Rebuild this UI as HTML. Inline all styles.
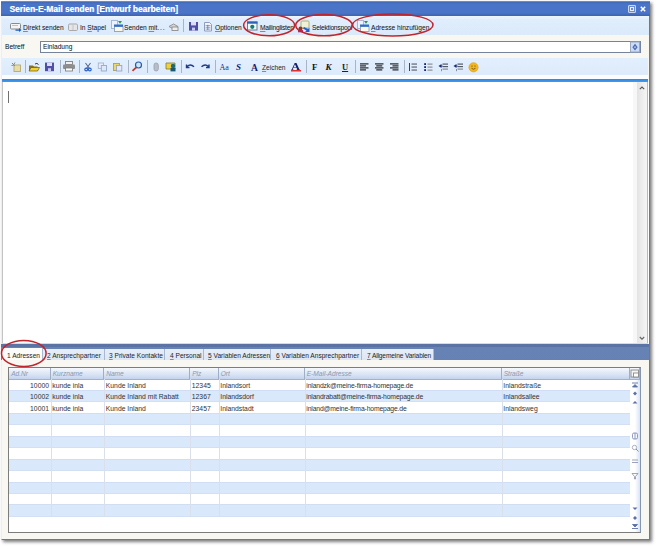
<!DOCTYPE html><html><head><meta charset="utf-8"><style>
*{margin:0;padding:0;box-sizing:border-box}
html,body{width:658px;height:548px;overflow:hidden;background:#fff;font-family:"Liberation Sans",sans-serif;}
.txt{text-shadow:0.2px 0 0 rgba(30,30,30,0.2)}
div{position:absolute}
.txt{font-size:6.6px;color:#1e1e1e;white-space:nowrap;line-height:8px}
.sep{width:1px;background:#a9b5c6}
u{text-decoration-color:#8a8a8a}
.tab{top:349px;height:11px;background:linear-gradient(#e6eef9,#dde6f3);border-right:1px solid #a9b8d0}
.tab span{position:absolute;top:3px;font-size:6.6px;color:#1e1e1e;white-space:nowrap;line-height:8px}
.hdr{top:368px;height:11.5px;background:linear-gradient(#f6f8fc,#d8e3f4 60%,#c4d4ee);border-right:1px solid #9eaec6;border-bottom:1px solid #a2b2ca}
.hdr span{position:absolute;left:2.2px;top:1.5px;font-size:6.6px;font-style:italic;color:#8c98ae;white-space:nowrap;line-height:8px}
.row{left:9px;width:621px;height:12.45px;box-shadow:inset 0 1px 0 #d0ddf3,inset 0 -1px 0 #d3e0f4}
.blue{background:#dae8fc}
.cell{font-size:6.8px;color:#333;white-space:nowrap;line-height:8px}
.vl{top:379px;width:1px;height:138px;background:#d9e0ec}
</style></head><body>
<div style="left:1px;top:1px;width:649px;height:539px;background:#f9f7f2;border-left:1px solid #eceef0;border-right:1.5px solid #70788a;border-bottom:1.5px solid #6e7a8a;box-shadow:2px 2px 3px rgba(0,0,0,0.5)"></div>
<div style="left:1px;top:1px;width:649px;height:15px;background:linear-gradient(#8aa2d2 0,#4169b6 1.2px,#4a74c8 3px,#4a74c8 12px,#3f66b2 14.5px)"></div>
<div style="left:9.5px;top:5px;font-size:8.4px;font-weight:bold;color:#fff;white-space:nowrap;line-height:9px;text-shadow:0.4px 0 0 rgba(255,255,255,0.6)">Serien-E-Mail senden [Entwurf bearbeiten]</div>
<div style="left:627.5px;top:5px;width:8px;height:7.5px;border:1px solid #c8d6f4;background:#6a8cd6;border-radius:1px"></div>
<div style="left:629.5px;top:7px;width:4px;height:3.5px;border:1px solid #e8eefc"></div>
<svg style="position:absolute;left:639.5px;top:5.5px" width="6" height="6"><path d="M0.8 0.8 L5.2 5.2 M5.2 0.8 L0.8 5.2" stroke="#fff" stroke-width="1.5"/></svg>
<div style="left:2px;top:16px;width:647px;height:19px;background:linear-gradient(#eef6fe,#dfedfc 20%,#dbeafb)"></div>
<div class="txt" style="left:23px;top:23.5px"><u>D</u>irekt senden</div>
<div class="txt" style="left:80px;top:23.5px">In <u>S</u>tapel</div>
<div class="txt" style="left:124px;top:23.5px">Senden <u>m</u>it<span style="letter-spacing:0.9px">...</span></div>
<div class="txt" style="left:215px;top:23.5px"><u>O</u>ptionen</div>
<div class="txt" style="left:260px;top:23.5px"><span style="letter-spacing:-0.2px"><u>M</u>ailinglisten</span></div>
<div class="txt" style="left:312px;top:23.5px"><span style="letter-spacing:-0.2px">Selektionspool</span></div>
<div class="txt" style="left:371px;top:23.5px"><u>A</u>dresse hinzufügen</div>
<div class="sep" style="left:183px;top:19px;height:13px"></div>
<div class="txt" style="left:5px;top:43px">Betreff</div>
<div style="left:40px;top:41px;width:601px;height:12px;background:#fff;border:1px solid #76839c"></div>
<div class="txt" style="left:43px;top:43px">Einladung</div>
<div style="left:2px;top:57.5px;width:646px;height:17px;background:linear-gradient(#e2effd,#dceafb)"></div>
<div class="sep" style="left:25px;top:60px;height:13px"></div>
<div class="sep" style="left:59.5px;top:60px;height:13px"></div>
<div class="sep" style="left:78.5px;top:60px;height:13px"></div>
<div class="sep" style="left:127.5px;top:60px;height:13px"></div>
<div class="sep" style="left:147px;top:60px;height:13px"></div>
<div class="sep" style="left:180.5px;top:60px;height:13px"></div>
<div class="sep" style="left:214.5px;top:60px;height:13px"></div>
<div class="sep" style="left:305.5px;top:60px;height:13px"></div>
<div class="sep" style="left:354.5px;top:60px;height:13px"></div>
<div class="sep" style="left:404px;top:60px;height:13px"></div>
<div style="left:2px;top:74.5px;width:646px;height:4.5px;background:#fbfcfd"></div>
<div style="left:2px;top:79px;width:646px;height:3px;background:linear-gradient(#4a80c4,#3590ea 50%,#4a98ea)"></div>
<div style="left:2px;top:82px;width:646px;height:261px;background:#fff;border-left:1px solid #c4c4c4"></div>
<div style="left:633px;top:82px;width:4px;height:261px;background:#f7f7f7"></div>
<div style="left:637px;top:82px;width:11px;height:261px;background:linear-gradient(90deg,#e3e3e3,#f3f3f3 85%);border-right:1px solid #b8b8b8"></div>
<div style="left:648px;top:82px;width:1px;height:261px;background:#fff"></div>
<div style="left:8px;top:91px;width:1px;height:11.5px;background:#707070"></div>
<div style="left:2px;top:343px;width:646px;height:1px;background:#d6dae2"></div>
<div style="left:1px;top:344px;width:648px;height:16px;background:linear-gradient(#5a73a4,#5a74a6 2.5px,#6783b6 3.5px,#6682b5)"></div>
<div class="tab" style="left:2px;width:41px;background:#fbfbf9;top:348px;height:12px;"><span style="left:5px;top:4px;">1 Adressen</span></div>
<div class="tab" style="left:43px;width:62px;"><span style="left:4px;"><u>2</u> Ansprechpartner</span></div>
<div class="tab" style="left:105px;width:60px;"><span style="left:4px;"><u>3</u> Private Kontakte</span></div>
<div class="tab" style="left:165px;width:39px;"><span style="left:5px;"><u>4</u> Personal</span></div>
<div class="tab" style="left:204px;width:67px;"><span style="left:4px;"><u>5</u> Variablen Adressen</span></div>
<div class="tab" style="left:271px;width:91px;"><span style="left:5px;"><u>6</u> Variablen Ansprechpartner</span></div>
<div class="tab" style="left:362px;width:72px;"><span style="left:5px;"><i style="font-style:normal;letter-spacing:-0.13px"><u>7</u> Allgemeine Variablen</i></span></div>
<div style="left:8px;top:367px;width:633px;height:166px;background:#fff;border:1px solid #7c7c7c;border-right-color:#8696b2"></div>
<div style="left:635px;top:379px;width:5px;height:153px;background:linear-gradient(90deg,rgba(255,255,255,0),#d8e3f6)"></div>
<div class="hdr" style="left:9px;width:41.5px"><span>Ad.Nr</span></div>
<div class="hdr" style="left:50.5px;width:53.5px"><span>Kurzname</span></div>
<div class="hdr" style="left:104px;width:86px"><span>Name</span></div>
<div class="hdr" style="left:190px;width:28.5px"><span>Plz</span></div>
<div class="hdr" style="left:218.5px;width:86.0px"><span>Ort</span></div>
<div class="hdr" style="left:304.5px;width:197.0px"><span>E-Mail-Adresse</span></div>
<div class="hdr" style="left:501.5px;width:128.0px"><span>Straße</span></div>
<div class="hdr" style="left:629.5px;width:10.5px"><span></span></div>
<div class="row blue" style="top:389.95px"></div>
<div class="row blue" style="top:412.85px"></div>
<div class="row blue" style="top:435.75px"></div>
<div class="row blue" style="top:458.65px"></div>
<div class="row blue" style="top:481.55px"></div>
<div class="row blue" style="top:504.45px"></div>
<div class="vl" style="left:50.5px"></div>
<div class="vl" style="left:104px"></div>
<div class="vl" style="left:190px"></div>
<div class="vl" style="left:218.5px"></div>
<div class="vl" style="left:304.5px"></div>
<div class="vl" style="left:501.5px"></div>
<div class="cell" style="left:9px;width:40px;text-align:right;top:381.6px">10000</div>
<div class="cell" style="left:52.3px;top:381.6px;">kunde inla</div>
<div class="cell" style="left:105.8px;top:381.6px;">Kunde Inland</div>
<div class="cell" style="left:191.8px;top:381.6px;">12345</div>
<div class="cell" style="left:220.3px;top:381.6px;">Inlandsort</div>
<div class="cell" style="left:306.3px;top:381.6px;letter-spacing:-0.15px;">inlandzk@meine-firma-homepage.de</div>
<div class="cell" style="left:503.3px;top:381.6px;">Inlandstraße</div>
<div class="cell" style="left:9px;width:40px;text-align:right;top:393.05px">10002</div>
<div class="cell" style="left:52.3px;top:393.05px;">kunde inla</div>
<div class="cell" style="left:105.8px;top:393.05px;">Kunde Inland mit Rabatt</div>
<div class="cell" style="left:191.8px;top:393.05px;">12367</div>
<div class="cell" style="left:220.3px;top:393.05px;">Inlandsdorf</div>
<div class="cell" style="left:306.3px;top:393.05px;letter-spacing:-0.15px;">inlandrabatt@meine-firma-homepage.de</div>
<div class="cell" style="left:503.3px;top:393.05px;">Inlandsallee</div>
<div class="cell" style="left:9px;width:40px;text-align:right;top:404.5px">10001</div>
<div class="cell" style="left:52.3px;top:404.5px;">kunde inla</div>
<div class="cell" style="left:105.8px;top:404.5px;">Kunde Inland</div>
<div class="cell" style="left:191.8px;top:404.5px;">23457</div>
<div class="cell" style="left:220.3px;top:404.5px;">Inlandstadt</div>
<div class="cell" style="left:306.3px;top:404.5px;letter-spacing:-0.15px;">inland@meine-firma-homepage.de</div>
<div class="cell" style="left:503.3px;top:404.5px;">Inlandsweg</div>
<svg style="position:absolute;left:0;top:0" width="658" height="548"><rect x="10.5" y="23.5" width="10" height="5.5" rx="1" fill="#f4f4f4" stroke="#8a8a8a" stroke-width="1"/><line x1="12" y1="25.5" x2="18" y2="25.5" stroke="#c0c0c0" stroke-width="1"/><path d="M15.5 29.5 L19 29.5 L19 28 L21.5 30 L19 32 L19 30.8 L15.5 30.8 Z" fill="#1a5cc8"/><rect x="68.5" y="24" width="9" height="6.5" rx="1.2" fill="#e6e6e6" stroke="#a9a9a9" stroke-width="1"/><line x1="73" y1="24.5" x2="73" y2="30" stroke="#c4c4c4" stroke-width="1"/><rect x="111.5" y="20.5" width="6" height="8" fill="#eef3fb" stroke="#a8b8d8" stroke-width="1"/><rect x="114.5" y="26.5" width="8.5" height="5" fill="#fbf9ee" stroke="#9aa6b8" stroke-width="1"/><rect x="114" y="24.5" width="9" height="2.2" fill="#2b6fcf"/><path d="M118 21 L122 21 L120 23.8 Z" fill="#2a9a3a"/><path d="M169 26.5 L173.5 24 L178 26.5 L173.5 29 Z" fill="#d8d8d8" stroke="#8c8c8c" stroke-width="0.9"/><rect x="172" y="27" width="6" height="3.5" fill="#eee" stroke="#8c8c8c" stroke-width="0.9"/><path d="M189 22 h9 v8.6 h-9 Z" fill="#4f4fa8"/><rect x="191" y="22" width="5" height="3.4" fill="#dcdcf2"/><rect x="192" y="27.6" width="3" height="3" fill="#c8c8ee"/><path d="M204.5 22.5 h5 l2 2 v6.5 h-7 Z" fill="#f2f5fb" stroke="#8e9cc0" stroke-width="1"/><path d="M205.5 25.5 h5 M205.5 27.3 h5 M205.5 29.1 h5" stroke="#8a98bc" stroke-width="0.8"/><path d="M207.8 24.8 v5.2" stroke="#6a7aa8" stroke-width="0.9"/><rect x="247.5" y="22" width="9.5" height="8" fill="#f2f8f4" stroke="#6a7a98" stroke-width="1"/><rect x="247" y="21.5" width="10.5" height="2.2" fill="#2e62b8"/><circle cx="252.3" cy="26.8" r="2.1" fill="#157a78"/><rect x="301" y="21" width="8" height="7" rx="1" fill="#eef0d8" stroke="#b4b070" stroke-width="1"/><circle cx="300.5" cy="28.5" r="2" fill="#8a3a1a"/><rect x="298" y="30" width="5" height="2.3" fill="#b03070"/><path d="M304 27 L308 29 L309.5 27.5 L309.5 32 L305 32 L306.5 30.5 L303 28.5 Z" fill="#2060d0"/><rect x="357.5" y="20.5" width="6" height="8" fill="#eef3fb" stroke="#a8b8d8" stroke-width="1"/><rect x="360.5" y="26.5" width="8.5" height="5" fill="#fbf9ee" stroke="#9aa6b8" stroke-width="1"/><rect x="360" y="24.5" width="9" height="2.2" fill="#2b6fcf"/><path d="M364 21 L368 21 L366 23.8 Z" fill="#2a9a3a"/><rect x="14" y="65" width="6.5" height="6.5" fill="#e8dca8" stroke="#b8a870" stroke-width="0.9"/><path d="M12 63 L15 66 M15 62.5 L13.5 65 M11.5 65.5 L14 65" stroke="#8a8a8a" stroke-width="1"/><path d="M29 65.5 h4 l1 1 h3.5 v4.5 h-8.5 Z" fill="#8a7020"/><path d="M29 71 L31 67.5 H39.5 L37.5 71 Z" fill="#f2d232" stroke="#6a5a10" stroke-width="0.7"/><path d="M35 64 q2 -1.5 3.5 0.5" stroke="#333" stroke-width="1" fill="none"/><path d="M45 62.6 h9 v8.6 h-9 Z" fill="#4f4fa8"/><rect x="47" y="62.6" width="5" height="3.4" fill="#dcdcf2"/><rect x="48" y="68.2" width="3" height="3" fill="#c8c8ee"/><rect x="65.5" y="61.5" width="7" height="3" fill="#f0f0f0" stroke="#808080" stroke-width="0.9"/><rect x="63" y="64.5" width="12" height="4.5" rx="1" fill="#8e8e8e"/><rect x="65.5" y="68" width="7" height="3" fill="#fff" stroke="#808080" stroke-width="0.9"/><path d="M85.5 63 L89.5 68.5 M90.5 63 L86.5 68.5" stroke="#5a6a8a" stroke-width="1.1"/><circle cx="86.2" cy="69.5" r="1.4" fill="none" stroke="#2a62c0" stroke-width="1.2"/><circle cx="89.8" cy="69.5" r="1.4" fill="none" stroke="#2a62c0" stroke-width="1.2"/><rect x="98.3" y="63" width="5.2" height="5.5" fill="#e6eef8" stroke="#a4b4d0" stroke-width="0.9"/><rect x="101.3" y="65.5" width="5.2" height="5.5" fill="#dde8f8" stroke="#98a8c8" stroke-width="0.9"/><rect x="113.5" y="63.5" width="6" height="7" fill="#e8d870" stroke="#a8a060" stroke-width="0.9"/><rect x="116.5" y="65.5" width="5.3" height="5.5" fill="#e4e8f8" stroke="#9aa4c8" stroke-width="0.9"/><circle cx="138.5" cy="65" r="3" fill="#cfe6fa" stroke="#2a5aa8" stroke-width="1.2"/><path d="M136.3 67.3 L132.5 70.8" stroke="#c03a2a" stroke-width="1.8"/><rect x="154" y="63" width="4.3" height="8" rx="2.1" fill="#b8bec8" stroke="#9aa0aa" stroke-width="0.8"/><path d="M166 63 h9 v6 h-9 Z" fill="#f0d040" stroke="#8a7a20" stroke-width="0.8"/><circle cx="173" cy="66" r="2.2" fill="#1a6a7a"/><rect x="170.5" y="68" width="5" height="3.4" fill="#1a5a70"/><path d="M187 66.5 q3.5 -3 7 0.3 M186.5 64.5 v3 h3" stroke="#1e3a8a" stroke-width="1.4" fill="none"/><path d="M208.5 66.5 q-3.5 -3 -7 0.3 M209 64.5 v3 h-3" stroke="#1e3a8a" stroke-width="1.4" fill="none"/><rect x="291" y="70" width="10" height="1.5" fill="#e03030"/><rect x="360" y="63" width="8.5" height="1.7" fill="#5a606a"/><rect x="360" y="65" width="6" height="1.7" fill="#5a606a"/><rect x="360" y="67" width="8.5" height="1.7" fill="#5a606a"/><rect x="360" y="69" width="6" height="1.7" fill="#5a606a"/><rect x="375.0" y="63" width="8.5" height="1.7" fill="#5a606a"/><rect x="376.25" y="65" width="6" height="1.7" fill="#5a606a"/><rect x="375.0" y="67" width="8.5" height="1.7" fill="#5a606a"/><rect x="376.25" y="69" width="6" height="1.7" fill="#5a606a"/><rect x="390.0" y="63" width="8.5" height="1.7" fill="#5a606a"/><rect x="392.5" y="65" width="6" height="1.7" fill="#5a606a"/><rect x="390.0" y="67" width="8.5" height="1.7" fill="#5a606a"/><rect x="392.5" y="69" width="6" height="1.7" fill="#5a606a"/><path d="M409.5 63 v8" stroke="#2a3a9a" stroke-width="1"/><rect x="411.5" y="63.5" width="5.5" height="1.1" fill="#555b66"/><rect x="411.5" y="66.5" width="5.5" height="1.1" fill="#555b66"/><rect x="411.5" y="69.5" width="5.5" height="1.1" fill="#555b66"/><rect x="424.2" y="63.2" width="1.8" height="1.8" fill="#12207a"/><rect x="427.5" y="63.5" width="5" height="1.2" fill="#8a8e96"/><rect x="424.2" y="66.2" width="1.8" height="1.8" fill="#12207a"/><rect x="427.5" y="66.5" width="5" height="1.2" fill="#8a8e96"/><rect x="424.2" y="69.2" width="1.8" height="1.8" fill="#12207a"/><rect x="427.5" y="69.5" width="5" height="1.2" fill="#8a8e96"/><rect x="442.5" y="63.5" width="5.5" height="1.2" fill="#555b66"/><rect x="442.5" y="66" width="5.5" height="1.2" fill="#555b66"/><rect x="442.5" y="68.5" width="5.5" height="1.2" fill="#8a8e96"/><path d="M438.5 66 L441.5 64 L441.5 68 Z" fill="#1a2a7a"/><path d="M440.5 66 h2" stroke="#1a2a7a" stroke-width="1"/><rect x="441.0" y="69" width="1" height="2.2" fill="#8a8e96"/><rect x="457.5" y="63.5" width="5.5" height="1.2" fill="#555b66"/><rect x="457.5" y="66" width="5.5" height="1.2" fill="#555b66"/><rect x="457.5" y="68.5" width="5.5" height="1.2" fill="#8a8e96"/><path d="M453.5 66 L456.5 64 L456.5 68 Z" fill="#1a2a7a"/><path d="M455.5 66 h2" stroke="#1a2a7a" stroke-width="1"/><rect x="456.0" y="69" width="1" height="2.2" fill="#8a8e96"/><circle cx="473.5" cy="67.3" r="4.6" fill="#f2b820" stroke="#e09a10" stroke-width="0.6"/><circle cx="472" cy="66" r="0.6" fill="#5a3a00"/><circle cx="475" cy="66" r="0.6" fill="#5a3a00"/><path d="M471.5 68.3 q2 1.8 4 0" stroke="#5a3a00" stroke-width="0.7" fill="none"/><path d="M639.8 89.2 L642 87 L644.2 89.2" fill="none" stroke="#555" stroke-width="1.1"/><path d="M639.8 337 L642 339.2 L644.2 337" fill="none" stroke="#666" stroke-width="1.1"/><rect x="630.5" y="42" width="9" height="10" fill="#ccdcf6" stroke="#9aa8c4" stroke-width="1"/><path d="M635 43.8 L637.6 47.2 L635 50.6 L632.4 47.2 Z" fill="#4868b4"/><path d="M635 45.8 L636.3 47.2 L635 48.6 L633.7 47.2 Z" fill="#a8bce8"/><rect x="631" y="370" width="7.5" height="7" fill="#f4f4f4" stroke="#8a8a8a" stroke-width="0.9"/><rect x="633.5" y="373" width="5" height="4" fill="#fff" stroke="#8a8a8a" stroke-width="0.9"/><path d="M632 383 h6 M632.5 387 L635 384.5 L637.5 387 Z" stroke="#5a70a8" stroke-width="0.9" fill="#5a70a8"/><path d="M635 391.5 L637 393.5 L635 395.5 L633 393.5 Z" fill="#5a70a8"/><path d="M632.5 403.5 L635 401 L637.5 403.5 Z" fill="#5a70a8"/><rect x="632.5" y="433" width="5" height="6" rx="1.5" fill="none" stroke="#8090b8" stroke-width="0.9"/><path d="M635 433 v6" stroke="#8090b8" stroke-width="0.9"/><circle cx="634.5" cy="447.5" r="2.2" fill="none" stroke="#a0a8b8" stroke-width="0.9"/><path d="M636 449 L638.5 451.5" stroke="#8090b8" stroke-width="1"/><path d="M632 460 h6 M632 462.5 h6" stroke="#9098b0" stroke-width="0.9"/><path d="M632 473.5 h6 L635.5 476.5 v2.5 h-1 v-2.5 Z" fill="none" stroke="#8a90a0" stroke-width="0.8"/><path d="M632.5 507.5 L635 510 L637.5 507.5 Z" fill="#5a70a8"/><path d="M635 516 L637 518 L635 520 L633 518 Z" fill="#5a70a8"/><path d="M632.5 524.5 L635 527 L637.5 524.5 Z M632 528.5 h6" stroke="#5a70a8" stroke-width="0.9" fill="#5a70a8"/><ellipse cx="269.1" cy="25.3" rx="25.5" ry="10.5" fill="none" stroke="#c0242c" stroke-width="1.5"/><ellipse cx="324" cy="25.2" rx="28.3" ry="10.6" fill="none" stroke="#c0242c" stroke-width="1.5"/><ellipse cx="392.8" cy="24.9" rx="40.2" ry="11" fill="none" stroke="#c0242c" stroke-width="1.5"/><ellipse cx="23.8" cy="353.4" rx="22.3" ry="13" fill="none" stroke="#c0242c" stroke-width="1.5"/></svg>
<div style="left:219.5px;top:62.5px;font-family:'Liberation Serif',serif;line-height:9px;white-space:nowrap;font-size:8px;color:#1e2f80;">Aa</div>
<div style="left:236px;top:63px;font-family:'Liberation Serif',serif;line-height:9px;white-space:nowrap;font-size:9px;font-weight:bold;font-style:italic;color:#14206e;">S</div>
<div style="left:251px;top:62.6px;font-family:'Liberation Serif',serif;line-height:9px;white-space:nowrap;font-size:9.6px;font-weight:bold;color:#14206e;">A</div>
<div style="left:291.2px;top:63px;font-family:'Liberation Serif',serif;line-height:9px;white-space:nowrap;font-size:9.4px;font-weight:bold;color:#14206e;transform:scaleX(1.35);transform-origin:0 0;">A</div>
<div style="left:312px;top:63.2px;font-family:'Liberation Serif',serif;line-height:9px;white-space:nowrap;font-size:8.8px;font-weight:bold;color:#111;">F</div>
<div style="left:325.5px;top:63.2px;font-family:'Liberation Serif',serif;line-height:9px;white-space:nowrap;font-size:9px;font-weight:bold;font-style:italic;color:#111;">K</div>
<div style="left:342px;top:63.2px;font-family:'Liberation Serif',serif;line-height:9px;white-space:nowrap;font-size:8.5px;font-weight:bold;color:#222;text-decoration:underline;">U</div>
<div class="txt" style="left:262px;top:64px;color:#333"><u>Z</u>eichen</div>
</body></html>
